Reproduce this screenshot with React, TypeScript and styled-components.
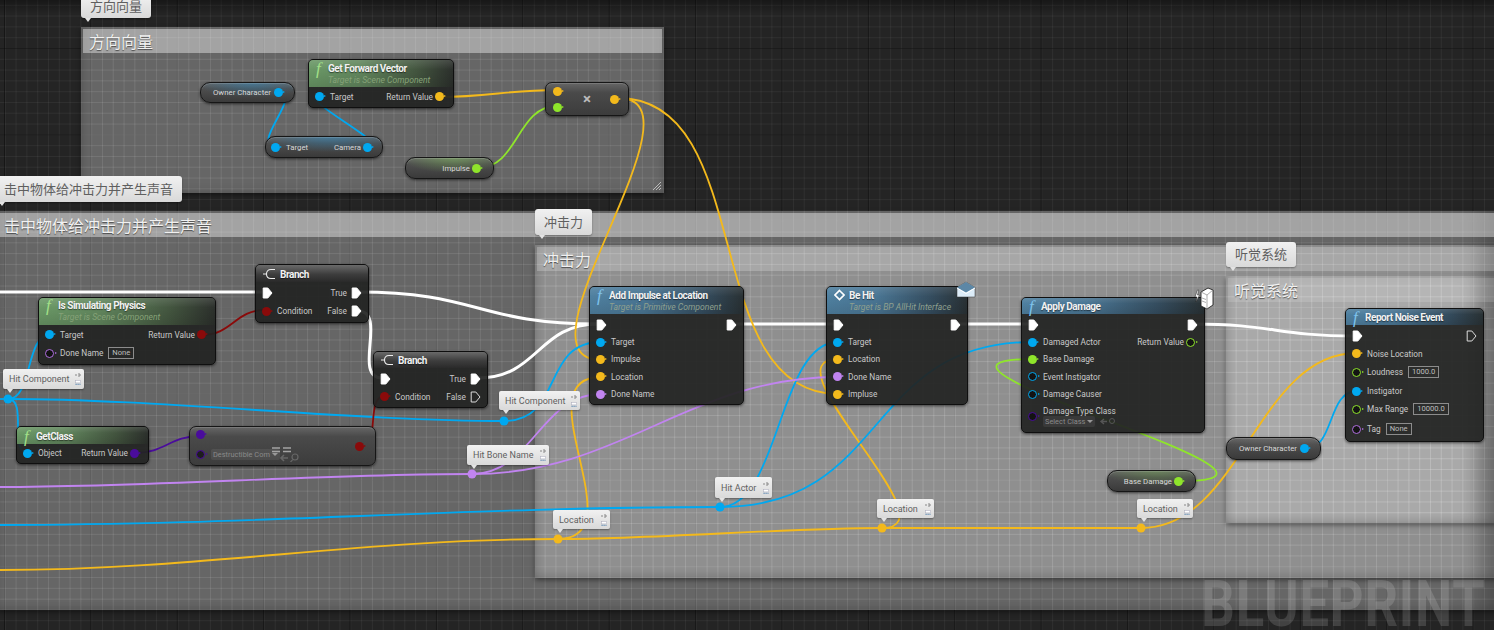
import React from "react";
import styled, { createGlobalStyle, css } from "styled-components";

const Global = createGlobalStyle`
  html, body { margin: 0; padding: 0; background: #232323; overflow: hidden; }
  #root { width: 1494px; height: 630px; }
`;

const FONT = `Roboto, "Noto Sans CJK SC", "Liberation Sans", sans-serif`;

const Canvas = styled.div`
  position: relative;
  width: 1494px;
  height: 630px;
  overflow: hidden;
  background: #242424;
  font-family: ${FONT};
`;

const Grid = styled.div`
  position: absolute;
  inset: 0;
  pointer-events: none;
  background-image:
    linear-gradient(90deg, rgba(0, 0, 0, 0.42) 1px, transparent 1px),
    linear-gradient(180deg, rgba(0, 0, 0, 0.42) 1px, transparent 1px),
    linear-gradient(90deg, rgba(255, 255, 255, 0.05) 1px, transparent 1px),
    linear-gradient(180deg, rgba(255, 255, 255, 0.05) 1px, transparent 1px);
  background-size: 86.4px 86.4px, 86.4px 86.4px, 10.8px 10.8px, 10.8px 10.8px;
  background-position: 4px 48px, 4px 48px, 4.8px 4.8px, 4.8px 4.8px;
`;

const Vignette = styled.div`
  position: absolute;
  inset: 0;
  pointer-events: none;
  background: linear-gradient(180deg, rgba(0, 0, 0, 0.35), transparent 14px);
`;

const Comment = styled.div<{ $x: number; $y: number; $w: number; $h: number; $a: number; $edge?: boolean }>`
  position: absolute;
  left: ${(p) => p.$x}px;
  top: ${(p) => p.$y}px;
  width: ${(p) => p.$w}px;
  height: ${(p) => p.$h}px;
  box-sizing: border-box;
  padding: 2px;
  background-color: rgba(255, 255, 255, ${(p) => p.$a});
  background-image:
    linear-gradient(90deg, rgba(255, 255, 255, 0.05) 1px, transparent 1px),
    linear-gradient(180deg, rgba(255, 255, 255, 0.05) 1px, transparent 1px);
  background-size: 10.8px 10.8px;
  background-position: 4.8px 4.8px;
  background-attachment: fixed;
  box-shadow:
    0 2px 5px rgba(0, 0, 0, 0.45),
    inset 0 -8px 8px -6px rgba(0, 0, 0, 0.14),
    inset 10px 0 10px -8px rgba(0, 0, 0, 0.16),
    ${(p) =>
      p.$edge ? "inset -30px 0 22px -14px rgba(0, 0, 0, 0.24)" : "inset -6px 0 6px -4px rgba(0, 0, 0, 0.14)"};
`;

const CommentBar = styled.div<{ $a?: number }>`
  height: 24px;
  line-height: 27px;
  padding-left: 6px;
  font-size: 16px;
  color: #f1f1f1;
  text-shadow: 0 1px 1px rgba(0, 0, 0, 0.55);
  background: rgba(255, 255, 255, ${(p) => p.$a ?? 0.4});
  white-space: nowrap;
`;

const Grip = styled.svg`
  position: absolute;
  right: 2px;
  bottom: 2px;
`;

const Bubble = styled.div<{ $x: number; $y: number; $w?: number; $h: number; $big?: boolean }>`
  position: absolute;
  left: ${(p) => p.$x}px;
  top: ${(p) => p.$y}px;
  ${(p) => (p.$w ? css`width: ${p.$w}px;` : "")}
  height: ${(p) => p.$h}px;
  box-sizing: border-box;
  display: flex;
  align-items: center;
  gap: 3px;
  white-space: nowrap;
  color: #5f5f5f;
  border-radius: 2px;
  background: linear-gradient(180deg, #f1f1f1, #d9d9d9);
  box-shadow: 0 1px 2px rgba(0, 0, 0, 0.35);
  ${(p) =>
    p.$big
      ? css`
          padding: 0 9px 2px 9px;
          font-size: 13px;
          border-radius: 3px;
        `
      : css`
          padding: 0 3px 0 6px;
          font-size: 9px;
        `}
  &::after {
    content: "";
    position: absolute;
    left: 4px;
    bottom: -4px;
    border-left: 3px solid transparent;
    border-right: 3px solid transparent;
    border-top: 4px solid #e4e4e4;
  }
`;

const BubbleTools = styled.span`
  display: flex;
  flex-direction: column;
  gap: 3px;
  margin-left: auto;
`;

const Node = styled.div<{ $x: number; $y: number; $w: number; $h?: number }>`
  position: absolute;
  left: ${(p) => p.$x}px;
  top: ${(p) => p.$y}px;
  width: ${(p) => p.$w}px;
  ${(p) => (p.$h ? css`height: ${p.$h}px;` : "")}
  box-sizing: border-box;
  border-radius: 5px;
  border: 1px solid #0f0f0f;
  background: rgba(34, 36, 34, 0.93);
  box-shadow: 0 1px 3px rgba(0, 0, 0, 0.6);
  color: #c9c9c9;
  font-size: 8.3px;
`;

const tints = {
  green: css`
    background:
      linear-gradient(180deg, rgba(255, 255, 255, 0.12), transparent 35%, rgba(0, 0, 0, 0.12)),
      linear-gradient(90deg, #6a9866 0%, #62875e 35%, #43553f 75%, #2c302c 100%);
  `,
  blue: css`
    background:
      linear-gradient(180deg, rgba(255, 255, 255, 0.1), transparent 35%, rgba(0, 0, 0, 0.1)),
      linear-gradient(90deg, #4f80a0 0%, #4a7694 35%, #344c5e 75%, #293134 100%);
  `,
  gray: css`
    background: linear-gradient(180deg, #6a6a6a, #3d3d3d 55%, #2a2a2a);
  `,
};

const Header = styled.div<{ $tint: keyof typeof tints; $h: number; $pt?: number }>`
  ${(p) => tints[p.$tint]}
  height: ${(p) => p.$h}px;
  box-sizing: border-box;
  border-radius: 4px 4px 0 0;
  display: flex;
  align-items: flex-start;
  gap: 4px;
  padding: ${(p) => p.$pt ?? 2}px 0 0 7px;
`;

const Fn = styled.span<{ $c: string }>`
  font-family: "Liberation Serif", serif;
  font-style: italic;
  font-size: 17px;
  line-height: 14px;
  color: ${(p) => p.$c};
  width: 8px;
  flex: none;
`;

const TitleBlock = styled.div`
  display: flex;
  flex-direction: column;
  white-space: nowrap;
`;

const Title = styled.div`
  font-size: 10px;
  font-weight: 700;
  letter-spacing: -0.45px;
  line-height: 13px;
  color: #f2f2f2;
  text-shadow: 0 1px 1px rgba(0, 0, 0, 0.5);
`;

const Sub = styled.div<{ $c: string }>`
  font-size: 8.6px;
  font-style: italic;
  line-height: 11px;
  color: ${(p) => p.$c};
`;

const Body = styled.div<{ $pt?: number }>`
  padding: ${(p) => p.$pt ?? 2}px 6px 2px 6px;
`;

const Row = styled.div<{ $h?: number }>`
  display: flex;
  align-items: center;
  justify-content: space-between;
  height: ${(p) => p.$h ?? 17.4}px;
`;

const Side = styled.div`
  display: flex;
  align-items: center;
  gap: 4px;
  white-space: nowrap;
`;

const SideRight = styled(Side)`
  gap: 2px;
  margin-right: 1px;
`;

const Dot = styled.span<{ $c: string; $hollow?: boolean }>`
  position: relative;
  flex: none;
  display: inline-block;
  width: 9px;
  height: 9px;
  box-sizing: border-box;
  border-radius: 50%;
  margin-right: 2px;
  background: ${(p) => (p.$hollow ? "rgba(0,0,0,.55)" : p.$c)};
  border: ${(p) => (p.$hollow ? `1.6px solid ${p.$c}` : "none")};
  &::after {
    content: "";
    position: absolute;
    top: 50%;
    right: ${(p) => (p.$hollow ? "-3.6px" : "-2px")};
    margin-top: -1.5px;
    border-top: 1.5px solid transparent;
    border-bottom: 1.5px solid transparent;
    border-left: 2px solid ${(p) => p.$c};
  }
`;

const ExecIcon = styled.svg`
  flex: none;
`;

const Exec = ({ hollow }: { hollow?: boolean }) => (
  <ExecIcon width="11" height="12" viewBox="0 0 11 12">
    <path
      d="M1.2 1h4.6L10 6l-4.2 5H1.2z"
      fill={hollow ? "none" : "#fff"}
      stroke={hollow ? "#ddd" : "#fff"}
      strokeWidth="1"
      strokeLinejoin="round"
    />
  </ExecIcon>
);

const Field = styled.span`
  display: inline-block;
  border: 1px solid #8c8c8c;
  padding: 0 3px;
  line-height: 10px;
  font-size: 7.6px;
  color: #bdbdbd;
  margin-left: 1px;
`;

const Var = styled.div<{ $x: number; $y: number; $w: number; $h: number; $tint: string; $spread?: boolean }>`
  position: absolute;
  left: ${(p) => p.$x}px;
  top: ${(p) => p.$y}px;
  width: ${(p) => p.$w}px;
  height: ${(p) => p.$h}px;
  box-sizing: border-box;
  border: 1px solid #161616;
  border-radius: 10px;
  display: flex;
  align-items: center;
  justify-content: ${(p) => (p.$spread ? "space-between" : "flex-end")};
  gap: 3px;
  padding: 0 ${(p) => (p.$spread ? 7 : 9)}px 0 5px;
  font-size: 7.8px;
  color: #d8d8d8;
  white-space: nowrap;
  background:
    radial-gradient(ellipse 60% 75% at 55% 0%, ${(p) => p.$tint}, transparent 100%),
    linear-gradient(180deg, #666 0%, #4e4e4e 30%, #3a3a3a 100%);
  box-shadow: 0 1px 3px rgba(0, 0, 0, 0.6), inset 0 1px 0 rgba(255, 255, 255, 0.14);
`;

const Op = styled.div`
  position: absolute;
  left: 545px;
  top: 82px;
  width: 84px;
  height: 34px;
  box-sizing: border-box;
  border: 1px solid #161616;
  border-radius: 7px;
  display: flex;
  align-items: center;
  justify-content: space-between;
  padding: 0 7px 0 7px;
  background: linear-gradient(180deg, #666 0%, #4a4a4a 30%, #3c3c3c 100%);
  box-shadow: 0 1px 3px rgba(0, 0, 0, 0.6), inset 0 1px 0 rgba(255, 255, 255, 0.14);
  color: #bbb;
  font-size: 15px;
  font-weight: 700;
`;

const PinStack = styled.div`
  display: flex;
  flex-direction: column;
  gap: 7px;
`;

const CastNode = styled.div`
  position: absolute;
  left: 189px;
  top: 426px;
  width: 187px;
  height: 40px;
  box-sizing: border-box;
  border: 1px solid #161616;
  border-radius: 7px;
  display: flex;
  align-items: center;
  justify-content: space-between;
  padding: 0 9px 0 6px;
  background: linear-gradient(180deg, #666 0%, #4a4a4a 25%, #3c3c3c 100%);
  box-shadow: 0 1px 3px rgba(0, 0, 0, 0.6), inset 0 1px 0 rgba(255, 255, 255, 0.14);
`;

const CastLeft = styled.div`
  display: flex;
  flex-direction: column;
  gap: 8px;
`;

const CastTools = styled.svg`
  margin-left: -12px;
  margin-top: -1px;
`;

const Select = styled.span`
  display: inline-flex;
  align-items: center;
  gap: 2px;
  background: rgba(255, 255, 255, 0.07);
  border-radius: 2px;
  padding: 1px 2px;
  font-size: 7.4px;
  line-height: 9px;
  color: #8a8a8a;
  white-space: nowrap;
`;

const Caret = styled.span`
  border-left: 3px solid transparent;
  border-right: 3px solid transparent;
  border-top: 3px solid #999;
`;

const Badge = styled.svg<{ $x: number; $y: number }>`
  position: absolute;
  left: ${(p) => p.$x}px;
  top: ${(p) => p.$y}px;
`;

const WireLayer = styled.svg`
  position: absolute;
  inset: 0;
  width: 1494px;
  height: 630px;
  pointer-events: none;
`;

const Watermark = styled.div`
  position: absolute;
  right: 9px;
  top: 580px;
  height: 50px;
  font-size: 64px;
  line-height: 50px;
  font-weight: 700;
  color: rgba(255, 255, 255, 0.14);
  letter-spacing: 1px;
  white-space: nowrap;
  transform: scaleX(0.82);
  transform-origin: right center;
`;

const B = "#00a8f0";
const Y = "#f3b91c";
const G = "#8fe52b";
const R = "#8a0a0a";
const P = "#4a0c9c";
const L = "#c184f0";
const W = "#ffffff";

type W_ = [string, number, number, number, number, number, number?];
const wires: W_[] = [
  [W, 0, 292, 262, 292, 0, 3],
  [W, 358, 292, 598, 324, 120, 3],
  [W, 358, 311, 382, 378, 30, 3],
  [W, 478, 378, 598, 324, 60, 3],
  [W, 732, 324, 836, 324, 0, 3],
  [W, 955, 324, 1030, 324, 0, 3],
  [W, 1193, 324, 1356, 336, 80, 3],
  [Y, 439, 97, 557, 90, 50],
  [Y, 618, 98, 601, 360, 95],
  [Y, 618, 98, 838, 394, 140],
  [Y, 558, 539, 601, 377, 80],
  [Y, 0, 570, 558, 539, 200],
  [Y, 558, 539, 882, 528, 100],
  [Y, 882, 528, 1141, 528, 0],
  [Y, 1141, 528, 1357, 353, 100],
  [Y, 882, 528, 838, 359, 75],
  [B, 279, 92, 275, 146, 25],
  [B, 368, 146, 320, 97, 25],
  [B, 8, 399, 50, 335, 25],
  [B, 8, 399, 28, 453, 20],
  [B, 0, 399, 8, 399, 0],
  [B, 8, 399, 504, 421, 150],
  [B, 504, 421, 601, 342, 60],
  [B, 0, 525, 720, 507, 250],
  [B, 720, 507, 838, 342, 60],
  [B, 720, 507, 1033, 342, 170],
  [B, 1305, 449, 1357, 391, 30],
  [R, 202, 335, 265, 310, 30],
  [R, 361, 446, 385, 396, 20],
  [P, 135, 453, 200, 436, 30],
  [L, 0, 487, 472, 474, 150],
  [L, 472, 474, 601, 394, 60],
  [L, 472, 474, 838, 377, 150],
  [G, 478, 168, 557, 106, 40],
  [G, 1180, 481, 1033, 359, 170],
];

const knots: [string, number, number][] = [
  [B, 8, 399],
  [B, 504, 421],
  [B, 720, 507],
  [L, 472, 474],
  [Y, 558, 539],
  [Y, 882, 528],
  [Y, 1141, 528],
];

const wirePath = (x1: number, y1: number, x2: number, y2: number, t: number) =>
  `M${x1} ${y1}C${x1 + t} ${y1} ${x2 - t} ${y2} ${x2} ${y2}`;

const Tools = () => (
  <BubbleTools>
    <svg width="6" height="4" viewBox="0 0 6 4">
      <path d="M0 2h2M4 0v4M4 2h2" stroke="#888" strokeWidth="1" fill="none" />
    </svg>
    <svg width="6" height="5" viewBox="0 0 6 5">
      <rect x="0.5" y="0.5" width="5" height="2.4" fill="#fff" stroke="#aab" strokeWidth=".5" />
      <path d="M.5 4.3h5" stroke="#47a" strokeWidth="1.1" strokeDasharray="1.2 .8" />
    </svg>
  </BubbleTools>
);

const PinL = ({ c, h, label, children }: { c: string; h?: boolean; label: string; children?: React.ReactNode }) => (
  <Side>
    <Dot $c={c} $hollow={h} />
    <span>{label}</span>
    {children}
  </Side>
);
const PinR = ({ c, h, label }: { c: string; h?: boolean; label: string }) => (
  <SideRight>
    <span>{label}</span>
    <Dot $c={c} $hollow={h} />
  </SideRight>
);

const BranchIcon = () => (
  <ExecIcon width="13" height="12" viewBox="0 0 13 12">
    <path d="M0 6h3M12 1.5H8C5 1.5 3.5 3.5 3.5 6S5 10.5 8 10.5h4" stroke="#eee" strokeWidth="1.1" fill="none" />
  </ExecIcon>
);

const Diamond = () => (
  <ExecIcon width="11" height="12" viewBox="0 0 11 12">
    <path d="M5.5 1.5L10 6l-4.5 4.5L1 6z" stroke="#fff" strokeWidth="1.6" fill="none" />
  </ExecIcon>
);

export default function App() {
  return (
    <Canvas>
      <Global />
      <Grid />
      <Comment $x={81} $y={27} $w={583} $h={166} $a={0.3}>
        <CommentBar>方向向量</CommentBar>
        <Grip width="10" height="10" viewBox="0 0 10 10">
          <path d="M1 9l8-8M4 9l5-5M7 9l2-2" stroke="#bbb" strokeWidth="1" />
        </Grip>
      </Comment>
      <Comment $x={-4} $y={211} $w={1502} $h={399} $a={0.3} $edge>
        <CommentBar $a={0.4}>击中物体给冲击力并产生声音</CommentBar>
      </Comment>
      <Comment $x={535} $y={245} $w={963} $h={333} $a={0.27} $edge>
        <CommentBar $a={0.22}>冲击力</CommentBar>
      </Comment>
      <Comment $x={1226} $y={276} $w={272} $h={247} $a={0.24} $edge>
        <CommentBar $a={0.14}>听觉系统</CommentBar>
      </Comment>
      <Vignette />

      <WireLayer viewBox="0 0 1494 630">
        {wires.map(([c, a, b, d, e, t, w], i) => (
          <path key={i} d={wirePath(a, b, d, e, t)} fill="none" stroke={c} strokeWidth={w ?? 1.8} />
        ))}
        {knots.map(([c, x, y], i) => (
          <circle key={i} cx={x} cy={y} r={4.5} fill={c} />
        ))}
      </WireLayer>

      <Bubble $x={81} $y={-5} $h={23} $big>方向向量</Bubble>
      <Bubble $x={-5} $y={176} $h={26} $big>击中物体给冲击力并产生声音</Bubble>
      <Bubble $x={535} $y={209} $h={26} $big>冲击力</Bubble>
      <Bubble $x={1226} $y={242} $h={25} $big>听觉系统</Bubble>

      <Var $x={200} $y={82} $w={95} $h={21} $tint="rgba(40,140,200,.45)">
        <span>Owner Character</span>
        <Dot $c={B} />
      </Var>
      <Node $x={308} $y={59} $w={146}>
        <Header $tint="green" $h={27}>
          <Fn $c="#a2e088">f</Fn>
          <TitleBlock>
            <Title>Get Forward Vector</Title>
            <Sub $c="#86a278">Target is Scene Component</Sub>
          </TitleBlock>
        </Header>
        <Body $pt={1}>
          <Row>
            <PinL c={B} label="Target" />
            <PinR c={Y} label="Return Value" />
          </Row>
        </Body>
      </Node>
      <Var $x={265} $y={136} $w={118} $h={22} $tint="rgba(40,140,200,.5)" $spread>
        <PinL c={B} label="Target" />
        <PinR c={B} label="Camera" />
      </Var>
      <Var $x={405} $y={157} $w={89} $h={22} $tint="rgba(130,200,90,.45)">
        <PinR c={G} label="Impulse" />
      </Var>
      <Op>
        <PinStack>
          <Dot $c={Y} />
          <Dot $c={G} />
        </PinStack>
        <span>×</span>
        <Dot $c={Y} />
      </Op>

      <Node $x={255} $y={264} $w={114}>
        <Header $tint="gray" $h={17} $pt={3}>
          <BranchIcon />
          <Title>Branch</Title>
        </Header>
        <Body $pt={1}>
          <Row $h={19}>
            <Exec />
            <Side>True <Exec /></Side>
          </Row>
          <Row $h={18}>
            <PinL c={R} label="Condition" />
            <Side>False <Exec /></Side>
          </Row>
        </Body>
      </Node>
      <Node $x={38} $y={297} $w={178}>
        <Header $tint="green" $h={27} $pt={1}>
          <Fn $c="#a2e088">f</Fn>
          <TitleBlock>
            <Title>Is Simulating Physics</Title>
            <Sub $c="#86a278">Target is Scene Component</Sub>
          </TitleBlock>
        </Header>
        <Body $pt={0}>
          <Row $h={19}>
            <PinL c={B} label="Target" />
            <PinR c={R} label="Return Value" />
          </Row>
          <Row $h={18}>
            <PinL c="#b06ee0" h label="Done Name">
              <Field>None</Field>
            </PinL>
          </Row>
        </Body>
      </Node>
      <Node $x={373} $y={351} $w={115}>
        <Header $tint="gray" $h={16}>
          <BranchIcon />
          <Title>Branch</Title>
        </Header>
        <Body $pt={1}>
          <Row $h={19}>
            <Exec />
            <Side>True <Exec /></Side>
          </Row>
          <Row $h={17}>
            <PinL c={R} label="Condition" />
            <Side>False <Exec hollow /></Side>
          </Row>
        </Body>
      </Node>
      <Bubble $x={3} $y={369} $w={81} $h={20}>Hit Component<Tools /></Bubble>

      <Node $x={16} $y={426} $w={133}>
        <Header $tint="green" $h={17} $pt={3}>
          <Fn $c="#a2e088">f</Fn>
          <Title>GetClass</Title>
        </Header>
        <Body $pt={1}>
          <Row $h={16}>
            <PinL c={B} label="Object" />
            <PinR c={P} label="Return Value" />
          </Row>
        </Body>
      </Node>
      <CastNode>
        <CastLeft>
          <Dot $c={P} />
          <Side>
            <Dot $c={P} $hollow />
            <Select>Destructible Com<Caret /></Select>
            <CastTools width="30" height="16" viewBox="0 0 30 16">
              <path d="M0 2h8M11 2h8M0 5.5h8M11 5.5h8" stroke="#a3a3a3" strokeWidth="1.6" />
              <path d="M9 12h7M12 9l-3 3 3 3" stroke="#666" strokeWidth="1.6" fill="none" />
              <circle cx="23" cy="11" r="3" stroke="#666" strokeWidth="1.2" fill="none" />
              <path d="M20.5 14l-2 2" stroke="#666" strokeWidth="1.2" />
            </CastTools>
          </Side>
        </CastLeft>
        <Dot $c={R} />
      </CastNode>

      <Node $x={589} $y={286} $w={155} $h={119}>
        <Header $tint="blue" $h={27}>
          <Fn $c="#7fc3ec">f</Fn>
          <TitleBlock>
            <Title>Add Impulse at Location</Title>
            <Sub $c="#8fa08f">Target is Primitive Component</Sub>
          </TitleBlock>
        </Header>
        <Body>
          <Row><Exec /><Exec /></Row>
          <Row><PinL c={B} label="Target" /></Row>
          <Row><PinL c={Y} label="Impulse" /></Row>
          <Row><PinL c={Y} label="Location" /></Row>
          <Row><PinL c={L} label="Done Name" /></Row>
        </Body>
      </Node>
      <Node $x={826} $y={286} $w={142} $h={119}>
        <Header $tint="blue" $h={27}>
          <Diamond />
          <TitleBlock>
            <Title>Be Hit</Title>
            <Sub $c="#8fa08f">Target is BP AllHit Interface</Sub>
          </TitleBlock>
        </Header>
        <Body>
          <Row><Exec /><Exec /></Row>
          <Row><PinL c={B} label="Target" /></Row>
          <Row><PinL c={Y} label="Location" /></Row>
          <Row><PinL c={L} label="Done Name" /></Row>
          <Row><PinL c={Y} label="Impluse" /></Row>
        </Body>
      </Node>
      <Badge $x={956} $y={281} width="20" height="18" viewBox="0 0 20 18">
        <path d="M1 6.5L10 1l9 5.5V16H1z" fill="#dcecf8" stroke="#333" strokeWidth=".5" />
        <path d="M1 6.5L10 1l9 5.5-9 5z" fill="#5c87a6" />
        <path d="M1 7l9 5.5L19 7" stroke="#fff" strokeWidth="1" fill="none" />
      </Badge>
      <Node $x={1021} $y={297} $w={184} $h={136}>
        <Header $tint="blue" $h={16}>
          <Fn $c="#7fc3ec">f</Fn>
          <Title>Apply Damage</Title>
        </Header>
        <Body>
          <Row><Exec /><Exec /></Row>
          <Row>
            <PinL c={B} label="Damaged Actor" />
            <PinR c={G} h label="Return Value" />
          </Row>
          <Row><PinL c={G} label="Base Damage" /></Row>
          <Row><PinL c={B} h label="Event Instigator" /></Row>
          <Row $h={17}><PinL c={B} h label="Damage Causer" /></Row>
          <Row $h={28}>
            <Side>
              <Dot $c={P} $hollow />
              <TitleBlock>
                <span>Damage Type Class</span>
                <Side>
                  <Select>Select Class<Caret /></Select>
                  <svg width="18" height="9" viewBox="0 0 18 9">
                    <path d="M2 4.5h6M5 2L2 4.5 5 7" stroke="#555" strokeWidth="1.4" fill="none" />
                    <circle cx="13" cy="4" r="2.5" stroke="#555" strokeWidth="1" fill="none" />
                  </svg>
                </Side>
              </TitleBlock>
            </Side>
          </Row>
        </Body>
      </Node>
      <Badge $x={1193} $y={287} width="21" height="23" viewBox="0 0 21 23">
        <path d="M8 5l7-4 5 2v15l-6 4-6-3z" fill="#fff" stroke="#222" strokeWidth=".9" />
        <path d="M8 5l6 3 6-5M14 8v14M9 11l4 1.5M9 14l4 1.5" stroke="#888" strokeWidth=".7" fill="none" />
        <path d="M4.5 3L2 10h2l-1 5 3.5-7H4.5l1.2-5z" fill="#fff" stroke="#222" strokeWidth=".5" />
      </Badge>
      <Node $x={1345} $y={308} $w={139} $h={134}>
        <Header $tint="blue" $h={16}>
          <Fn $c="#7fc3ec">f</Fn>
          <Title>Report Noise Event</Title>
        </Header>
        <Body>
          <Row $h={18}><Exec /><Exec hollow /></Row>
          <Row $h={17}><PinL c={Y} label="Noise Location" /></Row>
          <Row $h={20}><PinL c={G} h label="Loudness"><Field>1000.0</Field></PinL></Row>
          <Row $h={18}><PinL c={B} label="Instigator" /></Row>
          <Row $h={18}><PinL c={G} h label="Max Range"><Field>10000.0</Field></PinL></Row>
          <Row $h={22}><PinL c="#b06ee0" h label="Tag"><Field>None</Field></PinL></Row>
        </Body>
      </Node>
      <Var $x={1226} $y={437} $w={95} $h={23} $tint="rgba(120,120,120,.3)">
        <span>Owner Character</span>
        <Dot $c={B} />
      </Var>
      <Var $x={1107} $y={470} $w={89} $h={22} $tint="rgba(120,190,80,.35)">
        <PinR c={G} label="Base Damage" />
      </Var>

      <Bubble $x={499} $y={391} $w={81} $h={19}>Hit Component<Tools /></Bubble>
      <Bubble $x={467} $y={445} $w={82} $h={20}>Hit Bone Name<Tools /></Bubble>
      <Bubble $x={715} $y={477} $w={57} $h={21}>Hit Actor<Tools /></Bubble>
      <Bubble $x={553} $y={510} $w={57} $h={19}>Location<Tools /></Bubble>
      <Bubble $x={877} $y={499} $w={57} $h={19}>Location<Tools /></Bubble>
      <Bubble $x={1137} $y={499} $w={56} $h={19}>Location<Tools /></Bubble>

      <Watermark>BLUEPRINT</Watermark>
    </Canvas>
  );
}
